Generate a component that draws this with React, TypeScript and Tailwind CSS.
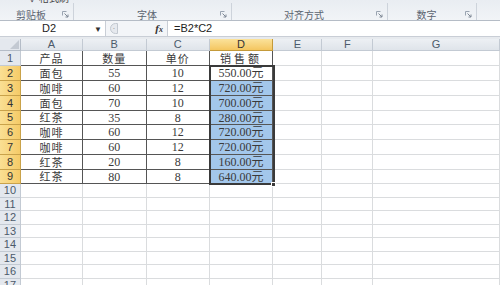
import React from "react";

const COLS = [
  { key: "A", w: "w-[62px]" },
  { key: "B", w: "w-[64px]" },
  { key: "C", w: "w-[63px]" },
  { key: "D", w: "w-[64px]" },
  { key: "E", w: "w-[49px]" },
  { key: "F", w: "w-[51px]" },
  { key: "G", w: "w-[127px]" },
];

const ROW_H = [
  "h-[15px]", "h-[15px]", "h-[15px]", "h-[15px]", "h-[14px]", "h-[15px]", "h-[15px]", "h-[15px]", "h-[14px]",
  "h-[14px]", "h-[13px]", "h-[14px]", "h-[13px]", "h-[14px]", "h-[13px]", "h-[14px]", "h-[13px]",
];

const DATA: string[][] = [
  ["产品", "数量", "单价", "销售额"],
  ["面包", "55", "10", "550.00元"],
  ["咖啡", "60", "12", "720.00元"],
  ["面包", "70", "10", "700.00元"],
  ["红茶", "35", "8", "280.00元"],
  ["咖啡", "60", "12", "720.00元"],
  ["咖啡", "60", "12", "720.00元"],
  ["红茶", "20", "8", "160.00元"],
  ["红茶", "80", "8", "640.00元"],
];

const CJK = "font-['Noto_Sans_CJK_SC',sans-serif]";
const NUM_FONT = "font-['Liberation_Serif','Noto_Sans_CJK_SC',serif]";

function isCjk(s: string) {
  return /^[\u4e00-\u9fff]+$/.test(s);
}

function Launcher() {
  return (
    <svg width="7" height="7" viewBox="0 0 7 7" className="shrink-0">
      <path d="M0.5 0.5h4M0.5 0.5v4" stroke="#9aa4b1" strokeWidth="1" fill="none" />
      <path d="M2.5 2.5l3.5 3.5M6 3.5v2.5h-2.5" stroke="#7e8895" strokeWidth="1" fill="none" />
    </svg>
  );
}

function RibbonGroup({ label, w, last }: { label: string; w: string; last?: boolean }) {
  return (
    <div className={`flex ${w} items-center pt-[6px] pr-[4px] ${last ? "" : "border-r border-[#cdd3db]"}`}>
      <span className={`flex-1 text-center text-[10px] leading-none text-[#5b6470] ${CJK}`}>{label}</span>
      <Launcher />
    </div>
  );
}

function Ribbon() {
  return (
    <div className="flex h-[21px] flex-col border-b border-[#b5bcc6] bg-gradient-to-b from-[#e9edf2] to-[#f1f4f7]">
      <div className="flex h-[3px] overflow-hidden">
        <div className={`ml-[30px] -mt-[7px] text-[10px] leading-[10px] text-[#444] ${CJK}`}>✓ 格式刷</div>
      </div>
      <div className="flex flex-1">
        <RibbonGroup label="剪贴板" w="w-[74px]" />
        <RibbonGroup label="字体" w="w-[158px]" />
        <RibbonGroup label="对齐方式" w="w-[156px]" />
        <RibbonGroup label="数字" w="w-[89px]" />
        <div className="flex-1" />
      </div>
    </div>
  );
}

function FormulaBar() {
  return (
    <div className="flex h-[16px] items-center border-b border-[#c9ced6] bg-[#f3f5f8]">
      <div className="flex h-full w-[106px] items-center border-r border-[#c9ced6] bg-white">
        <span className="flex-1 pl-[4px] text-center font-['Liberation_Sans',sans-serif] text-[11px] text-[#222]">D2</span>
        <span className="pr-[3px] text-[8px] leading-none text-[#333]">▼</span>
      </div>
      <div className="ml-[4px] flex h-[11px] w-[8px] items-center justify-center rounded-l-full border border-[#c2c8d0] bg-[#e6e9ee]">
        <span className="text-[7px] leading-none text-[#999]">·</span>
      </div>
      <div className="flex h-full w-[49px] items-center justify-end pr-[4px]">
        <span className="font-['Liberation_Serif',serif] text-[11px] font-bold italic leading-none text-[#333]">
          f<span className="text-[8px]">x</span>
        </span>
      </div>
      <div className="flex h-full flex-1 items-center border-l border-[#c9ced6] bg-white pl-[6px]">
        <span className="font-['Liberation_Sans',sans-serif] text-[11px] text-[#222]">=B2*C2</span>
      </div>
    </div>
  );
}

function ColumnHeaders() {
  return (
    <div className="flex h-[12px]">
      <div className="flex w-[21px] items-end justify-end border-r border-b border-[#b4bcc7] bg-[#e4e8ee] p-[1px]">
        <svg width="9" height="9" viewBox="0 0 9 9">
          <path d="M9 0V9H0Z" fill="#c3c9d2" />
        </svg>
      </div>
      {COLS.map((c) => (
        <div
          key={c.key}
          className={`flex ${c.w} items-center justify-center border-r border-b font-['Liberation_Sans',sans-serif] text-[11px] leading-none ${
            c.key === "D"
              ? "border-[#c49a3a] bg-gradient-to-b from-[#fbe29a] to-[#f4c65f] text-[#333]"
              : "border-[#c3cad3] bg-gradient-to-b from-[#edf0f4] to-[#dfe4ea] text-[#4c5a6a]"
          }`}
        >
          {c.key}
        </div>
      ))}
    </div>
  );
}

function Row({ idx }: { idx: number }) {
  const n = idx + 1;
  const sel = n >= 2 && n <= 9;
  const data = DATA[idx];
  return (
    <div className={`flex ${ROW_H[idx]}`}>
      <div
        className={`flex w-[21px] items-center justify-center border-r border-b font-['Liberation_Sans',sans-serif] text-[11px] leading-none ${
          sel
            ? "border-[#c9a24a] bg-gradient-to-r from-[#fadf93] to-[#f5cb67] text-[#333]"
            : "border-[#c3cad3] bg-[#e4e8ee] text-[#4c5a6a]"
        }`}
      >
        {n}
      </div>
      {COLS.map((c, ci) => {
        const inTable = data && ci < 4;
        const blue = ci === 3 && n >= 3 && n <= 9;
        const text = inTable ? data[ci] : "";
        const cjk = isCjk(text);
        return (
          <div
            key={c.key}
            className={`flex ${c.w} items-center justify-center border-r border-b leading-none text-[#3a3a3a] ${
              cjk ? `${CJK} text-[11px] tracking-[1px]` : `${NUM_FONT} text-[12px]`
            } ${inTable ? "border-[#555]" : "border-[#dadcde]"} ${blue ? "bg-[#a3c7eb]" : "bg-white"} ${
              n === 1 && ci === 3 ? "tracking-[3px]" : ""
            }`}
          >
            {text}
          </div>
        );
      })}
    </div>
  );
}

export default function App() {
  return (
    <div className="h-[285px] w-[500px] overflow-hidden bg-white">
      <Ribbon />
      <FormulaBar />
      <div className="h-[2px] bg-[#e7eaee]" />
      <div className="relative">
        <ColumnHeaders />
        {ROW_H.map((_, i) => (
          <Row key={i} idx={i} />
        ))}
        {/* selection outline D2:D9 + fill handle */}
        <div className="pointer-events-none absolute left-[209px] top-[26px] h-[120px] w-[66px] border-2 border-[#3a3a3a]" />
        <div className="pointer-events-none absolute left-[271px] top-[143px] h-[5px] w-[5px] border border-white bg-[#3a3a3a]" />
      </div>
    </div>
  );
}
